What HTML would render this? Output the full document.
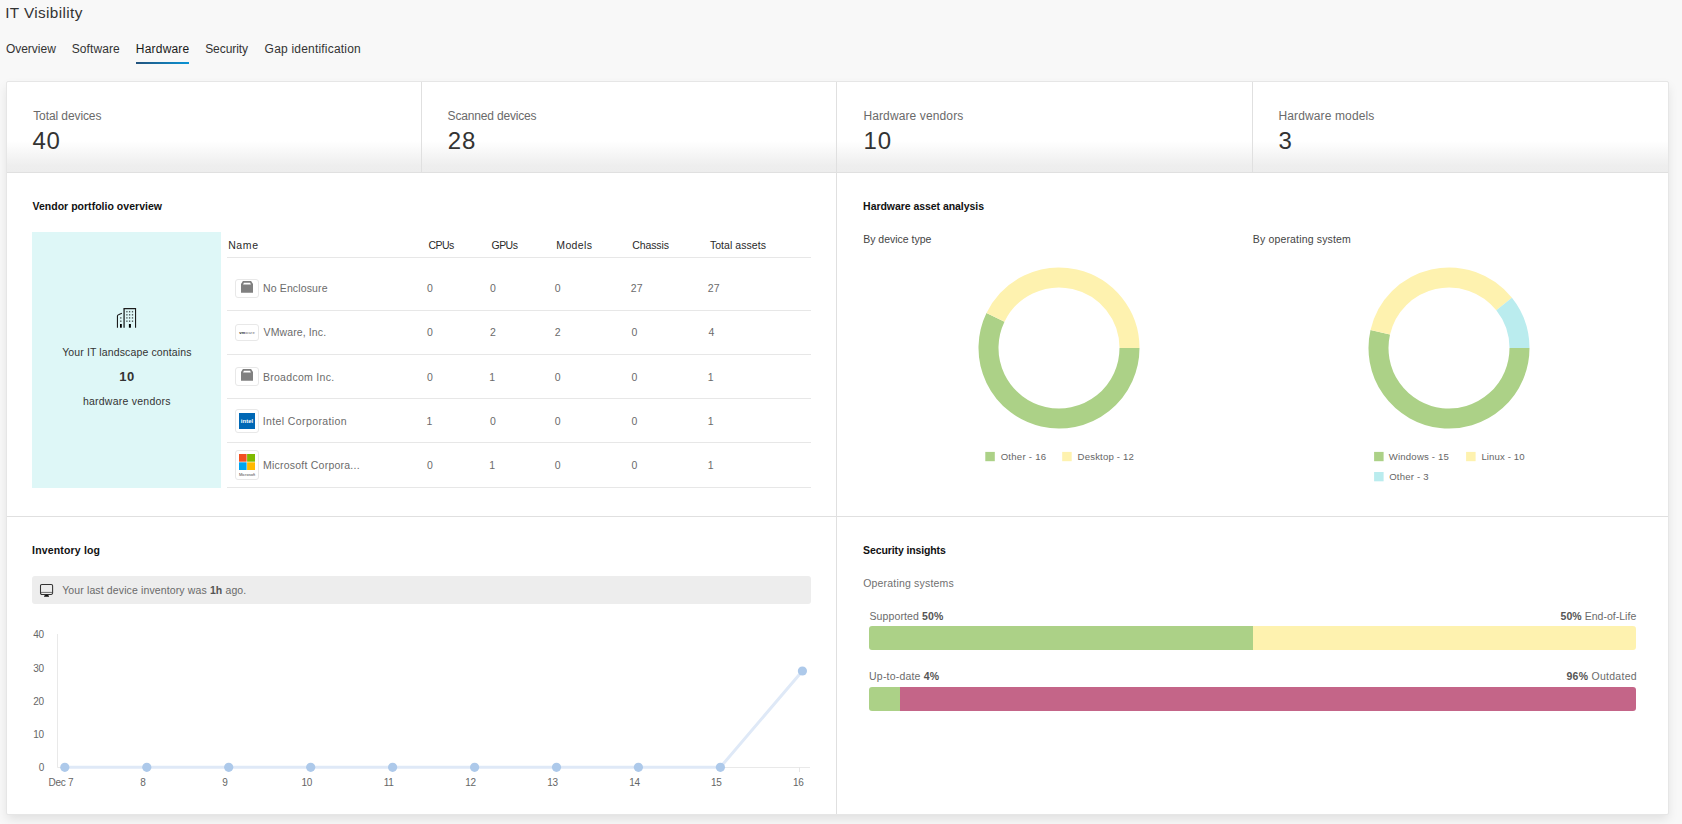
<!DOCTYPE html>
<html lang="en">
<head>
<meta charset="utf-8">
<title>IT Visibility</title>
<style>
*{box-sizing:border-box;margin:0;padding:0}
html,body{width:1682px;height:824px;overflow:hidden;background:#f8f8f8;font-family:"Liberation Sans","DejaVu Sans",sans-serif;color:#333}
.abs{position:absolute;white-space:nowrap;display:block}
.tx{line-height:20px;height:20px}
.title{font-size:15.3px;font-weight:normal;color:#333}
.tab{font-size:12px;color:#333}
#tabline{left:136px;top:62px;width:53px;height:2px;background:linear-gradient(90deg,#23527c,#0a94d6)}
#card{position:absolute;left:6px;top:81px;width:1663px;height:734px;background:#fff;border:1px solid #e6e6e6;border-radius:2px;box-shadow:0 5px 11px -1px rgba(0,0,0,.10)}
.vline{position:absolute;width:1px;background:#e0e0e0}
.hline{position:absolute;height:1px;background:#e0e0e0}
#statgrad{position:absolute;left:7px;top:141px;width:1661px;height:31px;background:linear-gradient(#fff 0,#eee 80%,#ededed 100%)}
.slabel{font-size:12px;color:#6a6a6a}
.sval{font-size:24px;color:#333}
.h{font-size:10.5px;font-weight:bold;color:#111}
.sub{font-size:10.5px;color:#444}
.b13{font-size:13px;font-weight:bold;color:#333}
.th{font-size:10.5px;color:#2a2a2a}
.td{font-size:10.5px;color:#6b6b6b}
.td b{color:#555}
.lg{font-size:9.6px;color:#666}
.tl{left:227px;width:584px;background:#e7e7e7}
.ib{border:1px solid #e8e8e8;border-radius:3px;background:#fff}
</style>
</head>
<body>
<div id="tabline" class="abs"></div>
<div id="card"></div>
<div id="statgrad"></div>
<div class="hline" style="left:7px;top:172px;width:1661px"></div>
<div class="hline" style="left:7px;top:516px;width:1661px"></div>
<div class="vline" style="left:421px;top:82px;height:90px"></div>
<div class="vline" style="left:836px;top:82px;height:732px"></div>
<div class="vline" style="left:1252px;top:82px;height:90px"></div>

<div class="abs" style="left:32px;top:232px;width:189px;height:256px;background:#def7f7"></div>
<svg class="abs" style="left:116px;top:308px" width="21" height="20" viewBox="0 0 21 20">
<path d="M8.1 19.7V0.6" fill="none" stroke="#4a5555" stroke-width="1.7"/>
<g fill="none" stroke="#1c1c1c" stroke-width="1.1">
<path d="M7.6 0.6H19.55V19.7"/>
<path d="M1.45 19.7V8.1Q1.45 7 2.5 6.65L5.9 5.3"/>
</g>
<g fill="#3c4444" opacity=".85"><rect x="10.25" y="2.95" width="1.3" height="1.5"/><rect x="10.25" y="6.05" width="1.3" height="1.5"/><rect x="10.25" y="9.15" width="1.3" height="1.5"/><rect x="10.25" y="12.45" width="1.3" height="1.5"/><rect x="12.95" y="2.95" width="1.3" height="1.5"/><rect x="12.95" y="6.05" width="1.3" height="1.5"/><rect x="12.95" y="9.15" width="1.3" height="1.5"/><rect x="12.95" y="12.45" width="1.3" height="1.5"/><rect x="15.85" y="2.95" width="1.3" height="1.5"/><rect x="15.85" y="6.05" width="1.3" height="1.5"/><rect x="15.85" y="9.15" width="1.3" height="1.5"/><rect x="15.85" y="12.45" width="1.3" height="1.5"/><rect x="4.15" y="9.15" width="1.3" height="1.5"/><rect x="4.15" y="12.45" width="1.3" height="1.5"/></g>
<g fill="#000"><rect x="12.9" y="16" width="2" height="3.7"/><rect x="4" y="16" width="1.8" height="3.7"/></g>
</svg>

<div class="hline tl" style="top:257px"></div>
<div class="hline tl" style="top:310px"></div>
<div class="hline tl" style="top:354px"></div>
<div class="hline tl" style="top:398px"></div>
<div class="hline tl" style="top:442px"></div>
<div class="hline tl" style="top:487px"></div>

<div class="abs ib" style="left:235px;top:279px;width:24px;height:19px"></div>
<svg class="abs" style="left:241px;top:281.2px" width="12" height="12" viewBox="0 0 12 12"><path fill-rule="evenodd" d="M0 11.8V2.9L1.9 0H10.1L12 2.9V11.8ZM2.9 1.7L2.1 3.4H9.9L9.1 1.7Z" fill="#808080"/></svg>
<div class="abs ib" style="left:235px;top:324px;width:24px;height:17px"></div>
<div class="abs" style="left:238px;top:330px;width:18px;font-size:4px;color:#6a6a6a;text-align:center;letter-spacing:.2px;line-height:6px"><b style="color:#222">vm</b>ware</div>
<div class="abs ib" style="left:235px;top:367px;width:24px;height:19px"></div>
<svg class="abs" style="left:241px;top:369.2px" width="12" height="12" viewBox="0 0 12 12"><path fill-rule="evenodd" d="M0 11.8V2.9L1.9 0H10.1L12 2.9V11.8ZM2.9 1.7L2.1 3.4H9.9L9.1 1.7Z" fill="#808080"/></svg>
<div class="abs ib" style="left:235px;top:409px;width:24px;height:24px"></div>
<div class="abs" style="left:239px;top:413px;width:16px;height:16px;background:#0068b5;color:#fff;font-size:6px;font-weight:bold;text-align:center;line-height:16.5px">intel</div>
<div class="abs ib" style="left:235px;top:450px;width:24px;height:30px"></div>
<svg class="abs" style="left:239px;top:454px" width="16" height="16" viewBox="0 0 16 16"><rect x="0" y="0" width="7.6" height="7.7" fill="#f25022"/><rect x="8.1" y="0" width="7.9" height="7.7" fill="#7fba00"/><rect x="0" y="8.3" width="7.6" height="7.7" fill="#00a4ef"/><rect x="8.1" y="8.3" width="7.9" height="7.7" fill="#ffb900"/></svg>
<div class="abs" style="left:237px;top:472px;width:20px;font-size:4px;color:#444;text-align:center;line-height:5px">Microsoft</div>

<div class="abs" style="left:32px;top:576px;width:779px;height:28px;background:#ededed;border-radius:3px"></div>
<svg class="abs" style="left:39px;top:583px" width="15" height="15" viewBox="0 0 15 15"><rect x="1.5" y="1.5" width="12.1" height="9.9" rx="1.3" fill="none" stroke="#333" stroke-width="1.05"/><path d="M2 9.4H13" stroke="#707070" stroke-width="1" fill="none"/><path d="M5.1 13.7V12.7Q7.55 10.9 10 12.7V13.7Z" fill="#111"/></svg>

<div class="abs" style="left:869px;top:626px;width:767px;height:24px;border-radius:3px;background:linear-gradient(90deg,#acd187 384px,#fef2af 384px)"></div>
<div class="abs" style="left:869px;top:687px;width:767px;height:24px;border-radius:3px;background:linear-gradient(90deg,#acd187 31px,#c46588 31px)"></div>

<svg class="abs" style="left:977px;top:265.5px" width="164" height="164" viewBox="977 265.5 164 164"><path d="M1129.50 347.50A70.5 70.5 0 1 1 995.48 316.91" fill="none" stroke="#acd187" stroke-width="20"/><path d="M995.48 316.91A70.5 70.5 0 0 1 1129.50 347.50" fill="none" stroke="#fef2af" stroke-width="20"/></svg>
<svg class="abs" style="left:1367px;top:265.5px" width="164" height="164" viewBox="1367 265.5 164 164"><path d="M1519.50 347.50A70.5 70.5 0 1 1 1380.27 331.81" fill="none" stroke="#acd187" stroke-width="20"/><path d="M1380.27 331.81A70.5 70.5 0 0 1 1504.12 303.54" fill="none" stroke="#fef2af" stroke-width="20"/><path d="M1504.12 303.54A70.5 70.5 0 0 1 1519.50 347.50" fill="none" stroke="#baecee" stroke-width="20"/></svg>
<svg class="abs" style="left:980px;top:448px" width="500" height="40" viewBox="980 448 500 40"><rect x="985.3" y="451.9" width="9.5" height="9.3" fill="#acd187"/><rect x="1062.2" y="451.9" width="9.5" height="9.3" fill="#fef2af"/><rect x="1374.1" y="451.9" width="9.5" height="9.3" fill="#acd187"/><rect x="1466.1" y="451.9" width="9.5" height="9.3" fill="#fef2af"/><rect x="1374.1" y="472" width="9.5" height="9.3" fill="#baecee"/></svg>

<svg class="abs" style="left:30px;top:625px" width="790" height="170" viewBox="30 625 790 170">
<path d="M57.5 634V767.5H810" fill="none" stroke="#e9e9e9" stroke-width="1"/>
<path d="M799.5 767v5" stroke="#e6e6e6" stroke-width="1"/>
<path d="M64.8 767.2H720.4L802.4 671" fill="none" stroke="#dfe9f7" stroke-width="3" stroke-linejoin="round"/>
<g fill="#adc9ea"><circle cx="64.8" cy="767.3" r="4.6"/><circle cx="146.8" cy="767.3" r="4.6"/><circle cx="228.7" cy="767.3" r="4.6"/><circle cx="310.7" cy="767.3" r="4.6"/><circle cx="392.6" cy="767.3" r="4.6"/><circle cx="474.6" cy="767.3" r="4.6"/><circle cx="556.5" cy="767.3" r="4.6"/><circle cx="638.4" cy="767.3" r="4.6"/><circle cx="720.4" cy="767.3" r="4.6"/><circle cx="802.4" cy="671" r="4.6"/></g>
<g font-size="10" fill="#666" letter-spacing="-0.3" font-family="Liberation Sans, sans-serif"><text x="43.9" y="637.9" text-anchor="end">40</text><text x="43.9" y="671.8" text-anchor="end">30</text><text x="43.9" y="705.1" text-anchor="end">20</text><text x="43.9" y="738.2" text-anchor="end">10</text><text x="43.9" y="771.0" text-anchor="end">0</text><text x="60.9" y="786" text-anchor="middle">Dec 7</text><text x="142.8" y="786" text-anchor="middle">8</text><text x="224.8" y="786" text-anchor="middle">9</text><text x="306.7" y="786" text-anchor="middle">10</text><text x="388.6" y="786" text-anchor="middle">11</text><text x="470.6" y="786" text-anchor="middle">12</text><text x="552.5" y="786" text-anchor="middle">13</text><text x="634.4" y="786" text-anchor="middle">14</text><text x="716.3" y="786" text-anchor="middle">15</text><text x="798.3" y="786" text-anchor="middle">16</text></g></svg>

<h1 id="t_title" class="abs tx title" style="left:5.16px;top:3.00px;letter-spacing:0.393px;">IT Visibility</h1>
<a id="t_tab1" class="abs tx tab" style="left:5.91px;top:39.00px;letter-spacing:-0.016px;">Overview</a>
<a id="t_tab2" class="abs tx tab" style="left:71.70px;top:39.00px;letter-spacing:0.093px;">Software</a>
<a id="t_tab3" class="abs tx tab" style="left:135.86px;top:39.00px;letter-spacing:0.191px;color:#1a1a1a">Hardware</a>
<a id="t_tab4" class="abs tx tab" style="left:205.17px;top:39.00px;letter-spacing:-0.068px;">Security</a>
<a id="t_tab5" class="abs tx tab" style="left:264.62px;top:39.00px;letter-spacing:0.201px;">Gap identification</a>
<div id="t_s1" class="abs tx slabel" style="left:33.16px;top:106.00px;letter-spacing:-0.090px;">Total devices</div>
<div id="t_v1" class="abs tx sval" style="left:32.41px;top:131.00px;letter-spacing:0.675px;">40</div>
<div id="t_s2" class="abs tx slabel" style="left:447.59px;top:106.00px;letter-spacing:-0.173px;">Scanned devices</div>
<div id="t_v2" class="abs tx sval" style="left:447.83px;top:131.00px;letter-spacing:0.719px;">28</div>
<div id="t_s3" class="abs tx slabel" style="left:863.40px;top:106.00px;letter-spacing:0.122px;">Hardware vendors</div>
<div id="t_v3" class="abs tx sval" style="left:863.55px;top:131.00px;letter-spacing:0.817px;">10</div>
<div id="t_s4" class="abs tx slabel" style="left:1278.40px;top:106.00px;letter-spacing:0.134px;">Hardware models</div>
<div id="t_v4" class="abs tx sval" style="left:1278.44px;top:131.00px;letter-spacing:0.000px;">3</div>
<h2 id="t_h1" class="abs tx h" style="left:32.46px;top:196.00px;letter-spacing:0.024px;">Vendor portfolio overview</h2>
<h2 id="t_h2" class="abs tx h" style="left:863.11px;top:196.00px;letter-spacing:-0.050px;">Hardware asset analysis</h2>
<h2 id="t_h3" class="abs tx h" style="left:32.09px;top:540.00px;letter-spacing:0.164px;">Inventory log</h2>
<h2 id="t_h4" class="abs tx h" style="left:863.12px;top:540.00px;letter-spacing:-0.118px;">Security insights</h2>
<div id="t_sub1" class="abs tx sub" style="left:863.17px;top:229.00px;letter-spacing:-0.007px;">By device type</div>
<div id="t_sub2" class="abs tx sub" style="left:1252.81px;top:229.00px;letter-spacing:0.162px;">By operating system</div>
<div id="t_sub3" class="abs tx sub" style="left:863.17px;top:573.00px;letter-spacing:0.193px;color:#707070">Operating systems</div>
<div id="t_b1" class="abs tx sub" style="left:62.17px;top:342.00px;letter-spacing:0.127px;color:#333">Your IT landscape contains</div>
<div id="t_b2" class="abs tx b13" style="left:119.28px;top:367.00px;letter-spacing:0.456px;">10</div>
<div id="t_b3" class="abs tx sub" style="left:82.88px;top:391.00px;letter-spacing:0.244px;color:#333">hardware vendors</div>
<span id="t_th1" class="abs tx th" style="left:228.16px;top:235.00px;letter-spacing:0.610px;">Name</span>
<span id="t_th2" class="abs tx th" style="left:428.53px;top:235.00px;letter-spacing:-0.579px;">CPUs</span>
<span id="t_th3" class="abs tx th" style="left:491.59px;top:235.00px;letter-spacing:-0.565px;">GPUs</span>
<span id="t_th4" class="abs tx th" style="left:556.32px;top:235.00px;letter-spacing:0.352px;">Models</span>
<span id="t_th5" class="abs tx th" style="left:632.27px;top:235.00px;letter-spacing:-0.116px;">Chassis</span>
<span id="t_th6" class="abs tx th" style="left:709.89px;top:235.00px;letter-spacing:0.060px;">Total assets</span>
<span id="t_l1" class="abs tx lg" style="left:1000.66px;top:447.00px;letter-spacing:0.244px;">Other - 16</span>
<span id="t_l2" class="abs tx lg" style="left:1077.62px;top:447.00px;letter-spacing:0.160px;">Desktop - 12</span>
<span id="t_l3" class="abs tx lg" style="left:1388.79px;top:447.00px;letter-spacing:0.181px;">Windows - 15</span>
<span id="t_l4" class="abs tx lg" style="left:1481.38px;top:447.00px;letter-spacing:0.127px;">Linux - 10</span>
<span id="t_l5" class="abs tx lg" style="left:1389.21px;top:467.00px;letter-spacing:0.180px;">Other - 3</span>
<span id="t_inv" class="abs tx td" style="left:62.17px;top:580.00px;letter-spacing:0.127px;color:#6a6a6a">Your last device inventory was <b>1h</b> ago.</span>
<span id="t_p1" class="abs tx td" style="left:869.38px;top:606.00px;letter-spacing:0.130px;">Supported <b>50%</b></span>
<span id="t_p2" class="abs tx td" style="left:1560.60px;top:606.00px;letter-spacing:0.024px;"><b>50%</b> End-of-Life</span>
<span id="t_p3" class="abs tx td" style="left:869.10px;top:666.00px;letter-spacing:0.191px;">Up-to-date <b>4%</b></span>
<span id="t_p4" class="abs tx td" style="left:1566.45px;top:666.00px;letter-spacing:0.277px;"><b>96%</b> Outdated</span>
<span id="t_r0n" class="abs tx td" style="left:263.02px;top:278.00px;letter-spacing:0.135px;">No Enclosure</span>
<span id="t_r0c0" class="abs tx td" style="left:426.94px;top:278.00px;letter-spacing:0.000px;">0</span>
<span id="t_r0c1" class="abs tx td" style="left:490.12px;top:278.00px;letter-spacing:0.000px;">0</span>
<span id="t_r0c2" class="abs tx td" style="left:554.70px;top:278.00px;letter-spacing:0.000px;">0</span>
<span id="t_r0c3" class="abs tx td" style="left:630.74px;top:278.00px;letter-spacing:0.082px;">27</span>
<span id="t_r0c4" class="abs tx td" style="left:707.67px;top:278.00px;letter-spacing:0.313px;">27</span>
<span id="t_r1n" class="abs tx td" style="left:263.57px;top:322.00px;letter-spacing:0.111px;">VMware, Inc.</span>
<span id="t_r1c0" class="abs tx td" style="left:426.94px;top:322.00px;letter-spacing:0.000px;">0</span>
<span id="t_r1c1" class="abs tx td" style="left:490.06px;top:322.00px;letter-spacing:0.000px;">2</span>
<span id="t_r1c2" class="abs tx td" style="left:554.67px;top:322.00px;letter-spacing:0.000px;">2</span>
<span id="t_r1c3" class="abs tx td" style="left:631.46px;top:322.00px;letter-spacing:0.000px;">0</span>
<span id="t_r1c4" class="abs tx td" style="left:708.59px;top:322.00px;letter-spacing:0.000px;">4</span>
<span id="t_r2n" class="abs tx td" style="left:262.92px;top:367.00px;letter-spacing:0.292px;">Broadcom Inc.</span>
<span id="t_r2c0" class="abs tx td" style="left:426.94px;top:367.00px;letter-spacing:0.000px;">0</span>
<span id="t_r2c1" class="abs tx td" style="left:489.37px;top:367.00px;letter-spacing:0.000px;">1</span>
<span id="t_r2c2" class="abs tx td" style="left:554.70px;top:367.00px;letter-spacing:0.000px;">0</span>
<span id="t_r2c3" class="abs tx td" style="left:631.46px;top:367.00px;letter-spacing:0.000px;">0</span>
<span id="t_r2c4" class="abs tx td" style="left:707.75px;top:367.00px;letter-spacing:0.000px;">1</span>
<span id="t_r3n" class="abs tx td" style="left:262.74px;top:411.00px;letter-spacing:0.390px;">Intel Corporation</span>
<span id="t_r3c0" class="abs tx td" style="left:426.40px;top:411.00px;letter-spacing:0.000px;">1</span>
<span id="t_r3c1" class="abs tx td" style="left:490.12px;top:411.00px;letter-spacing:0.000px;">0</span>
<span id="t_r3c2" class="abs tx td" style="left:554.70px;top:411.00px;letter-spacing:0.000px;">0</span>
<span id="t_r3c3" class="abs tx td" style="left:631.46px;top:411.00px;letter-spacing:0.000px;">0</span>
<span id="t_r3c4" class="abs tx td" style="left:707.75px;top:411.00px;letter-spacing:0.000px;">1</span>
<span id="t_r4n" class="abs tx td" style="left:262.92px;top:455.00px;letter-spacing:0.235px;">Microsoft Corpora...</span>
<span id="t_r4c0" class="abs tx td" style="left:426.94px;top:455.00px;letter-spacing:0.000px;">0</span>
<span id="t_r4c1" class="abs tx td" style="left:489.37px;top:455.00px;letter-spacing:0.000px;">1</span>
<span id="t_r4c2" class="abs tx td" style="left:554.70px;top:455.00px;letter-spacing:0.000px;">0</span>
<span id="t_r4c3" class="abs tx td" style="left:631.46px;top:455.00px;letter-spacing:0.000px;">0</span>
<span id="t_r4c4" class="abs tx td" style="left:707.75px;top:455.00px;letter-spacing:0.000px;">1</span>
</body>
</html>
